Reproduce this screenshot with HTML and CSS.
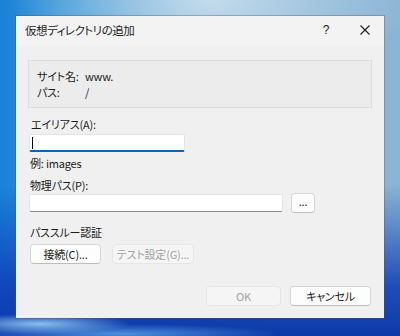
FILE: index.html
```html
<!DOCTYPE html>
<html lang="ja">
<head>
<meta charset="utf-8">
<link rel="stylesheet" href="styles.css">
</head>
<body>
<div class="dialog">
  <div class="titlebar">
    <span class="title">仮想ディレクトリの追加</span>
    <span class="help">?</span>
    <span class="close"><svg width="10" height="10" viewBox="0 0 10 10"><path d="M0.5 0.5 L9.5 9.5 M9.5 0.5 L0.5 9.5" stroke="#1a1a1a" stroke-width="1.1" fill="none"/></svg></span>
  </div>
  <div class="content">
    <div class="group">
      <div class="kv"><span class="k">サイト名:</span><span class="v">www.</span></div>
      <div class="kv"><span class="k">パス:</span><span class="v">/</span></div>
    </div>
    <div class="label alias-label">エイリアス(A):</div>
    <div class="input alias-input"><span class="caret"></span></div>
    <div class="label hint">例: images</div>
    <div class="label phys-label">物理パス(P):</div>
    <div class="phys-row">
      <div class="input phys-input"></div>
      <div class="btn browse">...</div>
    </div>
    <div class="label pass-label">パススルー認証</div>
    <div class="pass-row">
      <div class="btn connect">接続(C)...</div>
      <div class="btn disabled test">テスト設定(G)...</div>
    </div>
    <div class="footer">
      <div class="btn disabled ok">OK</div>
      <div class="btn cancel">キャンセル</div>
    </div>
  </div>
</div>
</body>
</html>
```
FILE: styles.css
```css
html, body {
  margin: 0;
  height: 100%;
}
body {
  width: 400px;
  height: 336px;
  overflow: hidden;
  padding: 16px 0 0 16px;
  box-sizing: border-box;
  font-family: "Noto Sans CJK JP", "Noto Sans", sans-serif;
  font-feature-settings: "palt";
  font-size: 11px;
  letter-spacing: -0.2px;
  color: #1b1b1b;
  background:
    radial-gradient(ellipse 90px 10px at 40px 324px, rgba(170,225,255,0.8), rgba(170,225,255,0) 100%),
    radial-gradient(ellipse 160px 10px at 120px 334px, rgba(120,200,255,0.6), rgba(120,200,255,0) 100%),
    radial-gradient(ellipse 200px 90px at 210px 0px, #c4dcec 0%, rgba(196,220,236,0) 100%),
    linear-gradient(180deg, rgba(10,50,170,0) 0%, rgba(10,50,170,0) 55%, rgba(14,60,180,0.85) 85%, #0c3aa8 100%),
    linear-gradient(90deg, #1a82d8 0%, #3393d8 15%, #7fb0d6 60%, #8cb4d4 100%);
}
.dialog {
  width: 368px;
  height: 302px;
  background: #f0f0f0;
  box-shadow: 0 0 0 1px rgba(80,80,80,0.35);
  display: flex;
  flex-direction: column;
}
.titlebar {
  height: 30px;
  background: #f3f3f3;
  display: flex;
  align-items: center;
  padding-left: 9px;
}
.title {
  flex: 1;
  font-size: 11.5px;
  letter-spacing: -0.5px;
  margin-top: -2px;
}
.help {
  width: 20px;
  text-align: center;
  font-family: "Liberation Sans", sans-serif;
  font-size: 12px;
  margin-right: 24px;
  margin-top: -2px;
}
.close {
  width: 10px;
  height: 10px;
  display: flex;
  margin-right: 14px;
  margin-top: -2px;
}
.content {
  padding: 0 12px;
  display: flex;
  flex-direction: column;
}
.group {
  margin-top: 14px;
  height: 48px;
  box-sizing: border-box;
  border: 1px solid #dcdcdc;
  background: #ececec;
  padding: 7px 8px;
}
.kv {
  display: flex;
  line-height: 16px;
  height: 16px;
}
.k {
  flex: none;
  width: 48px;
  white-space: nowrap;
}
.label {
  line-height: 16px;
  height: 16px;
  white-space: nowrap;
}
.alias-label {
  margin-top: 8px;
  padding-left: 3px;
}
.input {
  height: 18px;
  box-sizing: border-box;
  background: #ffffff;
  border: 1px solid #e4e4e4;
  border-bottom: 1px solid #8c8c8c;
  border-radius: 2px;
}
.alias-input {
  margin-top: 2px;
  margin-left: 1px;
  width: 156px;
  border-bottom: 2px solid #0f62b4;
  display: flex;
  align-items: center;
  padding-left: 2px;
}
.caret {
  width: 1px;
  height: 12px;
  background: #000;
}
.hint {
  margin-top: 3px;
  padding-left: 2px;
}
.phys-label {
  margin-top: 6px;
  padding-left: 2px;
}
.phys-row {
  display: flex;
  align-items: flex-start;
  height: 20px;
}
.phys-input {
  margin-top: 1px;
  margin-left: 1px;
  width: 254px;
}
.btn {
  box-sizing: border-box;
  height: 20px;
  display: flex;
  align-items: center;
  justify-content: center;
  background: #fdfdfd;
  border: 1px solid #d6d6d6;
  border-bottom-color: #bdbdbd;
  border-radius: 4px;
  white-space: nowrap;
}
.btn.disabled {
  background: #f5f5f5;
  border-color: #e6e6e6;
  color: #a2a2a2;
}
.browse {
  width: 24px;
  margin-left: 8px;
  padding-bottom: 4px;
}
.pass-label {
  margin-top: 11px;
  padding-left: 2px;
}
.pass-row {
  margin-top: 4px;
  display: flex;
  gap: 11px;
  padding-left: 2px;
}
.connect {
  width: 71px;
}
.test {
  width: 82px;
}
.footer {
  margin-top: 22px;
  display: flex;
  justify-content: flex-end;
  gap: 9px;
  padding-right: 1px;
}
.ok {
  width: 75px;
}
.cancel {
  width: 81px;
}
```
